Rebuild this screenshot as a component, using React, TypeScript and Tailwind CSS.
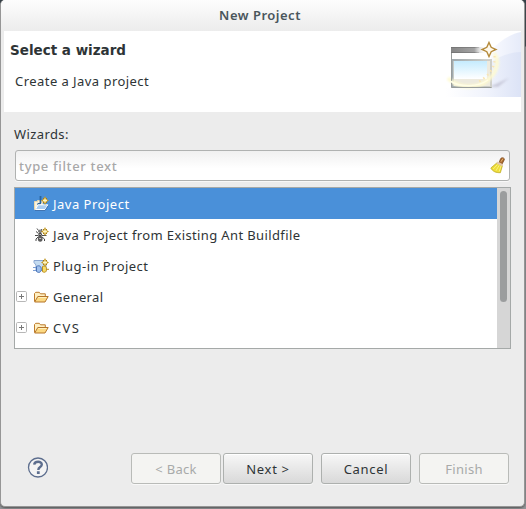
import React from "react";

const Sparkle = () => (
  <g>
    <path d="M12 0 13.5 3 16 4.5 13.5 6 12 9 10.5 6 8 4.5 10.5 3Z" fill="#c39a28" />
    <path d="M10 4.5h4M12 2.5v4" stroke="#fff6c4" strokeWidth="1.3" />
    <path d="M10 2h1v1h-1zM13 2h1v1h-1zM10 6h1v1h-1zM13 6h1v1h-1z" fill="#a67c14" />
  </g>
);

const JavaProjectIcon = () => (
  <svg width="16" height="16" viewBox="0 0 16 16" className="shrink-0">
    <path d="M1.5 13.5V5.5h3v-1h5V10H5Z" fill="#fbf3dc" stroke="#ead9ac" />
    <path d="M7.5 0v6.4c0 1.6-1.6 2-3 1.2" fill="none" stroke="#2b649c" strokeWidth="1.8" />
    <path d="M2.4 13.5 5 8.8h9.8L12 13.5Z" fill="#a9cdf1" stroke="#fff" />
    <path d="M2 14.5h10l3.2-4.7" fill="none" stroke="#4274b1" />
    <Sparkle />
  </svg>
);

const AntIcon = () => (
  <svg width="16" height="16" viewBox="0 0 16 16" className="shrink-0">
    <g stroke="#4b4b4b" strokeWidth="1" fill="none">
      <path d="M5.5 3.5 4 1.5M8 3.5 9 2M5.5 6.5 3 4.5M5.5 8.5H2M5.5 9.5 3 12v2M9 8.5h4.5M9 10l2.5 2v2" />
    </g>
    <ellipse cx="7.2" cy="4.3" rx="1.9" ry="1.8" fill="#666" />
    <ellipse cx="7.2" cy="7.6" rx="1.8" ry="1.8" fill="#444" />
    <ellipse cx="7.2" cy="11.8" rx="2.4" ry="3" fill="#5c5c5c" />
    <path d="M6.5 4h1.4M6.5 7.5h1.4M6.2 11.5h2" stroke="#c4c4c4" />
    <Sparkle />
  </svg>
);

const PluginIcon = () => (
  <svg width="16" height="16" viewBox="0 0 16 16" className="shrink-0">
    <path d="M1 2.5h9v2l3 1v7H3V7L1 4.5Z" fill="#c4dbf0" stroke="#8aa6d0" />
    <path d="M0 9.5h3M0 12.5h3" stroke="#7d9fd4" />
    <path d="M3.5 8.5c2.8-1.8 4.8 0 4.8 2.7s-2 4.3-4.8 2.3Z" fill="#9fc0ec" stroke="#4a72b4" />
    <path d="M9.5 8.5c2.8-1.2 4 0 4 2.7s-1.2 3.8-4 2.5ZM13 11.3h3" fill="#f6dc68" stroke="#b98d23" />
    <Sparkle />
  </svg>
);

const FolderIcon = () => (
  <svg width="16" height="16" viewBox="0 0 16 16" className="shrink-0">
    <path d="M1.5 12.5v-8l1.2-1.2h3.6L7.5 4.8h4.8v2.7" fill="#fff0c3" stroke="#bd7b2b" />
    <path d="M1.7 13 4.8 7.5h10.4L12 13Z" fill="#fcd982" stroke="#b5752a" strokeLinejoin="round" />
    <path d="M5.3 8.5h8.2" stroke="#fff0bd" />
  </svg>
);

const BroomIcon = () => (
  <svg width="16" height="18" viewBox="0 0 16 18" className="mb-0.5 shrink-0">
    <path d="m9 6.7 1.6-4c.9-1.7 4.4-1 3.7 1.1L12 8.2Z" fill="#a8682b" stroke="#744114" strokeWidth=".7" />
    <path d="m11 5.7 2-3.2" stroke="#e9b777" />
    <path d="M7 6.8 0.8 12c2 3.6 5 4.8 9.6 4.7l2-7Z" fill="#eddc38" stroke="#b9a51e" strokeWidth=".7" />
    <path d="m7.5 8.5-4.3 4.5M9.2 9.3l-3.3 5.5M11 10l-1.8 5.5" stroke="#fff78d" strokeWidth=".8" />
    <path d="m7 6.4 5.6 2.8" stroke="#e3c8ad" strokeWidth="2.2" />
  </svg>
);

const Banner = () => (
  <svg width="75" height="66" viewBox="0 0 75 66" className="shrink-0">
    <defs>
      <linearGradient id="sweep" x1="0" x2="1"><stop offset="0" stopColor="#fff" /><stop offset=".55" stopColor="#f0f3fc" /><stop offset="1" stopColor="#dce3f6" /></linearGradient>
      <linearGradient id="sweepTop" x1="0" x2="1"><stop offset="0" stopColor="#f9faff" /><stop offset="1" stopColor="#e6ebf9" /></linearGradient>
      <linearGradient id="bar" x1="0" x2="1"><stop offset="0" stopColor="#858585" /><stop offset=".6" stopColor="#a4a4a4" /><stop offset=".9" stopColor="#fff" /></linearGradient>
      <linearGradient id="pane" x2="0" y2="1"><stop offset="0" stopColor="#c5ebfe" /><stop offset="1" stopColor="#fff" /></linearGradient>
      <linearGradient id="frame" x1="0" x2="1"><stop offset="0" stopColor="#9fa9ae" /><stop offset="1" stopColor="#d0d0ca" /></linearGradient>
      <radialGradient id="shine"><stop offset="0" stopColor="#fff" /><stop offset="1" stopColor="#fff" stopOpacity="0" /></radialGradient>
      <filter id="soft" x="-20%" y="-20%" width="140%" height="140%"><feGaussianBlur stdDeviation="1.1" /></filter>
    </defs>
    <path d="M45 19C54 10 64 3 75 1V66H45Z" fill="url(#sweepTop)" />
    <path d="M0 66V57C26 57 38 22 75 21V66Z" fill="url(#sweep)" />
    <path d="m43 56 20-9-11 9Z" fill="#aaa8bd" opacity=".5" filter="url(#soft)" />
    <path d="M4 57.5h40" stroke="#b4b4bb" strokeWidth="1.5" filter="url(#soft)" />
    <rect x="5" y="16" width="40" height="40" fill="#fff" />
    <rect x="5" y="16" width="40" height="6" fill="url(#bar)" />
    <path d="M5 16.5h28M5 21.5h28" stroke="#666" opacity=".5" />
    <rect x="6.5" y="29" width="38.5" height="27" fill="#edeade" stroke="url(#frame)" strokeWidth="2" />
    <rect x="8" y="30" width="33" height="18" fill="url(#pane)" />
    <path d="M2 47C12 58 32 58 42 49c9-8 12-18 6-27" fill="none" stroke="#fffbd0" strokeWidth="4" opacity=".9" filter="url(#soft)" />
    <path d="M5.5 22V56.5h40" fill="none" stroke="#989c9b" />
    <path d="M4 50C15 57 32 56 42 49" fill="none" stroke="#fffde6" strokeWidth="1.5" />
    <path d="M48.5 25c1 11-4 19-18 27" fill="none" stroke="#fae6b4" strokeWidth="2.2" strokeDasharray="1.5 3.5" />
    <circle cx="39" cy="19" r="11" fill="url(#shine)" />
    <path d="m43 11.5 2.2 4.8 4.8 2.2-4.8 2.2-2.2 4.8-2.2-4.8-4.8-2.2 4.8-2.2Z" fill="#fff9ec" stroke="#b48a3b" strokeWidth="1.4" />
  </svg>
);

const items = [
  { label: "Java Project", Icon: JavaProjectIcon, spacing: "tracking-[0.5px]", expandable: false },
  { label: "Java Project from Existing Ant Buildfile", Icon: AntIcon, spacing: "tracking-[0.38px]", expandable: false },
  { label: "Plug-in Project", Icon: PluginIcon, spacing: "tracking-[0.45px]", expandable: false },
  { label: "General", Icon: FolderIcon, spacing: "tracking-[0.35px]", expandable: true },
  { label: "CVS", Icon: FolderIcon, spacing: "tracking-[1.4px]", expandable: true },
];

const Expander = () => (
  <svg width="11" height="11" viewBox="0 0 11 11">
    <rect x=".5" y=".5" width="10" height="10" rx="1.2" fill="#fff" stroke="#b7b7b7" />
    <path d="M3 5.5h5M5.5 3v5" stroke="#777" />
  </svg>
);

const DialogButton = ({ label, disabled = false }: { label: string; disabled?: boolean }) => (
  <button
    disabled={disabled}
    className={
      disabled
        ? "h-[31px] w-[90px] rounded-[3px] border border-[#b9bbb8] bg-[#f4f4f2] tracking-[0.3px] text-[#a8aaa9] shadow-[0_1px_0_#f8f8f8]"
        : "h-[31px] w-[90px] rounded-[3px] border border-[#adb0ae] bg-linear-to-b from-[#f7f7f7] to-[#d9d9d9] tracking-[0.7px] shadow-[0_1px_0_#f8f8f8,inset_0_1px_0_#fff]"
    }
  >
    {label}
  </button>
);

export default function App() {
  return (
    <div className="h-[509px] w-[526px] overflow-hidden bg-linear-to-b from-[#354047] from-[46px] to-[#929497] to-[47px] font-['Noto_Sans',sans-serif] text-[13px] leading-5 text-[#2e3436]">
      <div className="flex h-[507px] w-[525px] flex-col overflow-hidden rounded-[5px] border border-t-0 border-[#969696] bg-[#ececec] shadow-[0_1px_2px_#555]">
        <header className="flex h-[31px] shrink-0 items-center justify-center bg-linear-to-b from-[#fdfdfd] to-[#ececec] pb-0.5 pr-[5px] font-semibold tracking-[0.5px] text-[#4a565c]">
          New Project
        </header>
        <section className="ml-[3px] flex h-[81px] w-[517px] shrink-0 justify-between bg-white">
          <div className="pl-1.5 pt-[9px]">
            <h1 className="font-['DejaVu_Sans',sans-serif] text-[13.5px] font-bold tracking-normal">Select a wizard</h1>
            <p className="pl-[5px] pt-[11px] tracking-[0.45px]">Create a Java project</p>
          </div>
          <Banner />
        </section>
        <main className="flex flex-1 flex-col px-[13px] pt-3">
          <label className="h-[26px] tracking-[0.4px]">Wizards:</label>
          <div className="ml-px flex h-[31px] w-[495px] shrink-0 items-center justify-between rounded-[3px] border border-[#b0b2b1] bg-linear-to-b from-[#f0f0f0] to-white to-60% pl-[3px] pr-[3px] shadow-[0_1px_0_#f8f8f8]">
            <span className="font-medium tracking-[0.65px] text-[#a8a8a8]">type filter text</span>
            <BroomIcon />
          </div>
          <div className="mt-1.5 flex h-[162px] w-[497px] shrink-0 border border-[#a5a9a8] bg-white">
            <ul className="w-[482px]">
              {items.map(({ label, Icon, spacing, expandable }, index) => (
                <li key={label} className={index === 0 ? "flex h-[31px] items-center bg-[#4a90d9] text-white" : "flex h-[31px] items-center"}>
                  <span className="w-[18px] pl-px">{expandable && <Expander />}</span>
                  <Icon />
                  <span className={`pl-1 ${spacing}`}>{label}</span>
                </li>
              ))}
            </ul>
            <div className="w-[13px] bg-[#d6d6d6] pl-[3px] pt-[3px]">
              <div className="h-[111px] w-[7px] rounded-full bg-[#9b9d9e]" />
            </div>
          </div>
          <footer className="mt-auto mb-[22px] flex h-[31px] items-center pl-[13px]">
            <svg width="21" height="21" viewBox="0 0 21 21" className="mr-[83px] mb-[3px] shrink-0">
              <circle cx="11" cy="10.5" r="9.5" fill="#f4f4f4" stroke="#5d6e8e" strokeWidth="1.3" />
              <path d="M7.2 7.6C7.6 3.9 14.8 3.8 14.8 7.5c0 2.6-3.5 2.3-3.5 5.4" fill="none" stroke="#5d6e8e" strokeWidth="2.4" />
              <path d="M9.9 14.3h2.8v2.6H9.9Z" fill="#5d6e8e" />
            </svg>
            <div className="flex gap-2">
              <div className="flex gap-0.5"><DialogButton label="< Back" disabled /><DialogButton label="Next >" /></div>
              <DialogButton label="Cancel" />
              <DialogButton label="Finish" disabled />
            </div>
          </footer>
        </main>
      </div>
    </div>
  );
}
